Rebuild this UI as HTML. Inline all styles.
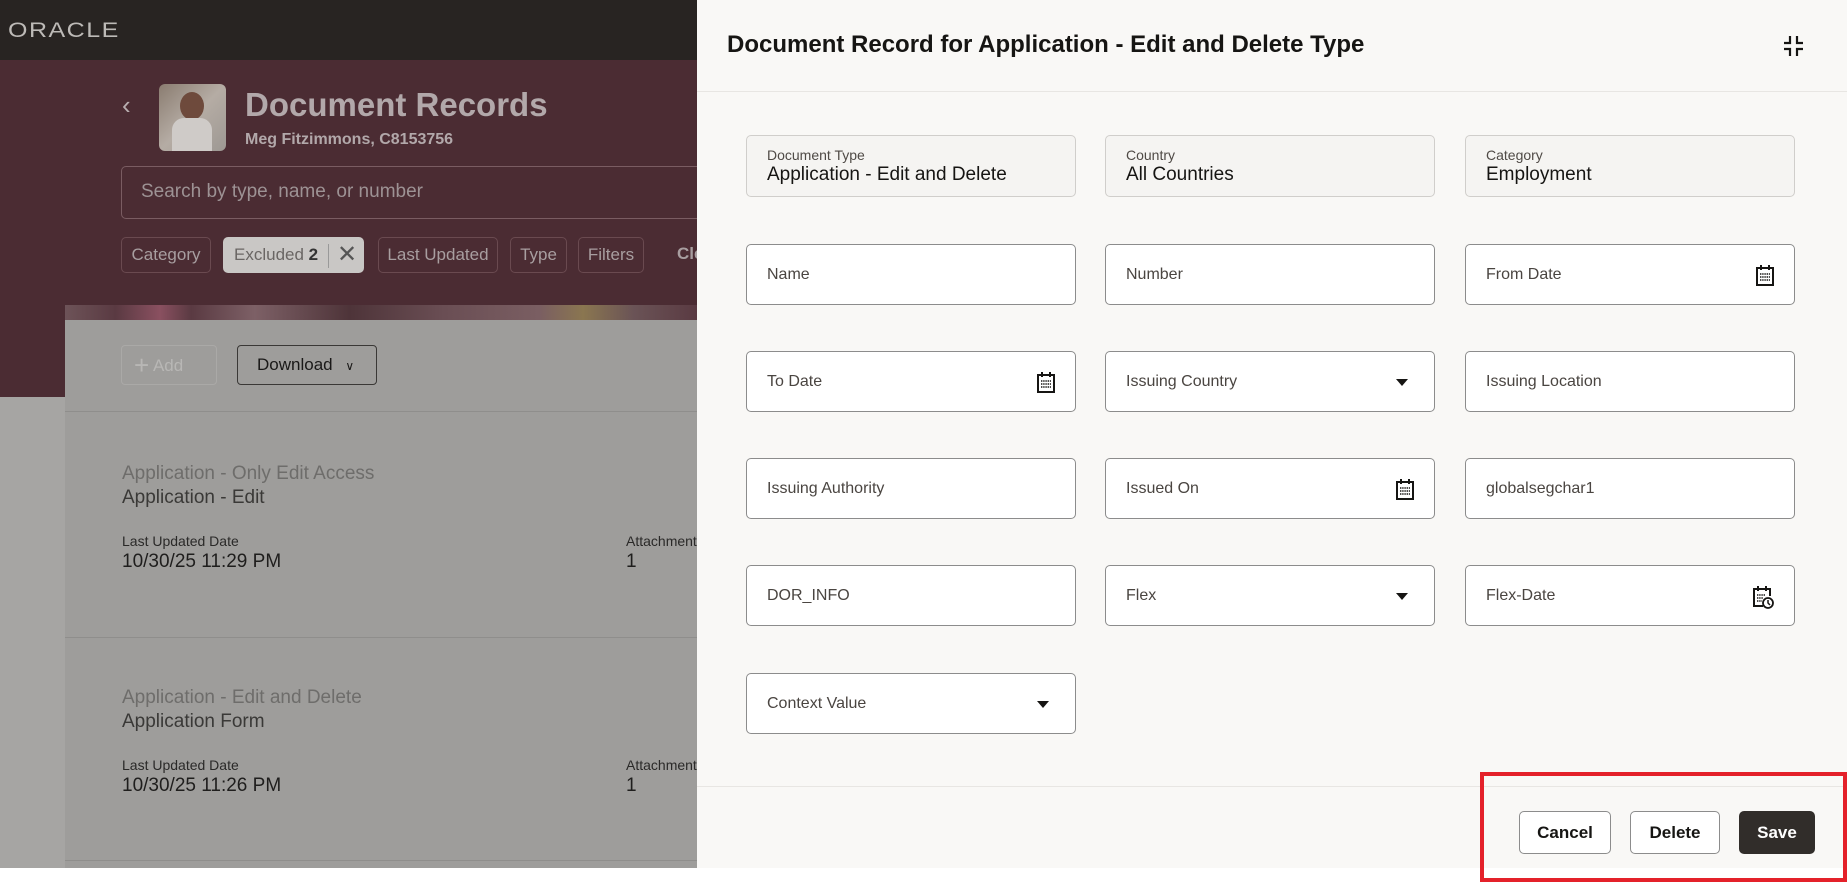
<!DOCTYPE html>
<html><head><meta charset="utf-8"><style>
*{box-sizing:border-box;margin:0;padding:0}
body{width:1847px;height:883px;position:relative;overflow:hidden;background:#fff;font-family:"Liberation Sans",sans-serif}
.a{position:absolute}
.t{position:absolute;white-space:nowrap}
.chip{position:absolute;top:237px;height:36px;border:1px solid #6a4a50;border-radius:5px;color:#a89ea0;font-size:17px;line-height:34px;text-align:center}
.f{position:absolute;width:330px;height:61px;border:1px solid #8c8c8c;border-radius:5px;background:#fff}
.f span{position:absolute;left:20px;top:0;line-height:59px;font-size:16px;color:#4a4541}
.ro{background:#f5f4f2;border-color:#d0cecb;height:62px}
.ro .l{position:absolute;left:20px;top:11px;font-size:14px;color:#4f4a46}
.ro .v{position:absolute;left:20px;top:28px;font-size:19px;color:#161513}
.ic{position:absolute;right:20px;top:20px}
.car{position:absolute;right:26px;top:27px;width:0;height:0;border-left:6px solid transparent;border-right:6px solid transparent;border-top:7px solid #161513}
.btn{position:absolute;top:811px;height:43px;border:1px solid #8c8c8c;border-radius:5px;background:#fff;font-size:17px;font-weight:bold;line-height:41px;text-align:center;color:#161513}
</style></head><body>
<div class="a" style="left:0;top:0;width:697px;height:60px;background:#282422"></div>
<div class="t" style="left:8px;top:16px;font-size:25px;color:#bdbab7;letter-spacing:1.5px;transform:scaleY(0.85)">ORACLE</div>
<div class="a" style="left:0;top:60px;width:697px;height:337px;background:#4b2c33"></div>
<div class="a" style="left:0;top:397px;width:697px;height:471px;background:#a6a5a3"></div>
<div class="t" style="left:122px;top:90px;font-size:26px;color:#b8aeb0">‹</div>
<div class="a" style="left:159px;top:84px;width:67px;height:67px;border-radius:6px;background:linear-gradient(135deg,#8a7c70,#b5aca4 50%,#9d9893)"></div>
<div class="a" style="left:180px;top:92px;width:24px;height:28px;border-radius:50%;background:#6e4a3c"></div>
<div class="a" style="left:172px;top:118px;width:40px;height:33px;border-radius:12px 12px 0 0;background:#cfcbc8"></div>
<div class="t" style="left:245px;top:86px;font-size:33px;font-weight:bold;color:#b2a8aa">Document Records</div>
<div class="t" style="left:245px;top:131px;font-size:16px;font-weight:bold;color:#b2a8aa">Meg Fitzimmons, C8153756</div>
<div class="a" style="left:121px;top:166px;width:620px;height:53px;border:1px solid #7a5c62;border-radius:5px"></div>
<div class="t" style="left:141px;top:181px;font-size:19px;color:#9d9294">Search by type, name, or number</div>
<div class="chip" style="left:121px;width:90px">Category</div>
<div class="chip" style="left:223px;width:141px;background:#c9c7c5;border-color:#c9c7c5;color:#6a6664;text-align:left;padding-left:10px">Excluded <b style="color:#333">2</b><span style="position:absolute;left:104px;top:6px;height:24px;border-left:1px solid #999"></span><span style="position:absolute;left:113px;top:0;font-size:24px;color:#555">✕</span></div>
<div class="chip" style="left:378px;width:120px">Last Updated</div>
<div class="chip" style="left:510px;width:57px">Type</div>
<div class="chip" style="left:578px;width:66px">Filters</div>
<div class="t" style="left:677px;top:244px;font-size:17px;font-weight:bold;color:#a89ea0">Cle</div>
<div class="a" style="left:65px;top:305px;width:632px;height:16px;background:linear-gradient(90deg,#6d5358 0,#5a3a42 8%,#8a5060 15%,#5a3a42 20%,#7d6066 30%,#4e3439 45%,#6a4e54 60%,#7a5e62 75%,#8a7650 82%,#6a5356 90%,#5a3a42 100%)"></div>
<div class="a" style="left:65px;top:320px;width:632px;height:548px;background:#9e9d9b"></div>
<div class="a" style="left:121px;top:345px;width:96px;height:40px;border:1px solid #aaa9a7;border-radius:4px;color:#b8b7b5;font-size:17px;line-height:38px;padding-left:12px"><span style="font-size:26px;vertical-align:-3px">+</span> Add</div>
<div class="a" style="left:237px;top:345px;width:140px;height:40px;border:1px solid #3a3836;border-radius:4px;color:#1a1918;font-size:17px;line-height:38px;padding-left:19px">Download <span style="font-size:12px;margin-left:8px">∨</span></div>
<div class="a" style="left:65px;top:411px;width:632px;height:1px;background:#8f8e8c"></div>
<div class="a" style="left:65px;top:637px;width:632px;height:1px;background:#8f8e8c"></div>
<div class="a" style="left:65px;top:860px;width:632px;height:1px;background:#8f8e8c"></div>
<div class="t" style="left:122px;top:463px;font-size:19px;color:#6e6d6b">Application - Only Edit Access</div>
<div class="t" style="left:122px;top:487px;font-size:19px;color:#3a3937">Application - Edit</div>
<div class="t" style="left:122px;top:533px;font-size:14px;color:#2a2928">Last Updated Date</div>
<div class="t" style="left:122px;top:551px;font-size:19px;color:#1f1e1d">10/30/25 11:29 PM</div>
<div class="t" style="left:626px;top:533px;font-size:14px;color:#2a2928">Attachments</div>
<div class="t" style="left:626px;top:551px;font-size:19px;color:#1f1e1d">1</div>
<div class="t" style="left:122px;top:687px;font-size:19px;color:#6e6d6b">Application - Edit and Delete</div>
<div class="t" style="left:122px;top:711px;font-size:19px;color:#3a3937">Application Form</div>
<div class="t" style="left:122px;top:757px;font-size:14px;color:#2a2928">Last Updated Date</div>
<div class="t" style="left:122px;top:775px;font-size:19px;color:#1f1e1d">10/30/25 11:26 PM</div>
<div class="t" style="left:626px;top:757px;font-size:14px;color:#2a2928">Attachments</div>
<div class="t" style="left:626px;top:775px;font-size:19px;color:#1f1e1d">1</div>

<div class="a" style="left:697px;top:0;width:1150px;height:868px;background:#f9f8f6"></div>
<div class="a" style="left:697px;top:91px;width:1150px;height:1px;background:#e8e6e3"></div>
<div class="a" style="left:697px;top:786px;width:1150px;height:1px;background:#e8e6e3"></div>
<div class="t" style="left:727px;top:31px;font-size:24px;font-weight:bold;color:#161513">Document Record for Application - Edit and Delete Type</div>
<svg class="a" style="left:1783px;top:36px" width="21" height="20" viewBox="0 0 21 20" fill="none" stroke="#161513" stroke-width="2.2"><path d="M7 0v7H1M14 0v7h6M7 20v-7H1M14 20v-7h6"/></svg>

<div class="f ro" style="left:746px;top:135px"><div class="l">Document Type</div><div class="v">Application - Edit and Delete</div></div>
<div class="f ro" style="left:1105px;top:135px"><div class="l">Country</div><div class="v">All Countries</div></div>
<div class="f ro" style="left:1465px;top:135px"><div class="l">Category</div><div class="v">Employment</div></div>

<div class="f" style="left:746px;top:244px"><span>Name</span></div>
<div class="f" style="left:1105px;top:244px"><span>Number</span></div>
<div class="f" style="left:1465px;top:244px"><span>From Date</span><svg class="ic" width="18" height="21" viewBox="0 0 18 21"><rect x="1" y="3" width="16" height="17" fill="none" stroke="#161513" stroke-width="2"/><path d="M5 0v5M13 0v5" stroke="#161513" stroke-width="2"/><path d="M4 9h10M4 12h10M4 15h10" stroke="#161513" stroke-width="1.6" stroke-dasharray="1.4 0.8"/></svg></div>

<div class="f" style="left:746px;top:351px"><span>To Date</span><svg class="ic" width="18" height="21" viewBox="0 0 18 21"><rect x="1" y="3" width="16" height="17" fill="none" stroke="#161513" stroke-width="2"/><path d="M5 0v5M13 0v5" stroke="#161513" stroke-width="2"/><path d="M4 9h10M4 12h10M4 15h10" stroke="#161513" stroke-width="1.6" stroke-dasharray="1.4 0.8"/></svg></div>
<div class="f" style="left:1105px;top:351px"><span>Issuing Country</span><div class="car"></div></div>
<div class="f" style="left:1465px;top:351px"><span>Issuing Location</span></div>

<div class="f" style="left:746px;top:458px"><span>Issuing Authority</span></div>
<div class="f" style="left:1105px;top:458px"><span>Issued On</span><svg class="ic" width="18" height="21" viewBox="0 0 18 21"><rect x="1" y="3" width="16" height="17" fill="none" stroke="#161513" stroke-width="2"/><path d="M5 0v5M13 0v5" stroke="#161513" stroke-width="2"/><path d="M4 9h10M4 12h10M4 15h10" stroke="#161513" stroke-width="1.6" stroke-dasharray="1.4 0.8"/></svg></div>
<div class="f" style="left:1465px;top:458px"><span>globalsegchar1</span></div>

<div class="f" style="left:746px;top:565px"><span>DOR_INFO</span></div>
<div class="f" style="left:1105px;top:565px"><span>Flex</span><div class="car"></div></div>
<div class="f" style="left:1465px;top:565px"><span>Flex-Date</span><svg class="ic" width="21" height="23" viewBox="0 0 21 23"><path d="M10 20H1V3h16v7" fill="none" stroke="#161513" stroke-width="2"/><path d="M5 0v5M13 0v5" stroke="#161513" stroke-width="2"/><path d="M4 9h8M4 12h6M4 15h5" stroke="#161513" stroke-width="1.6" stroke-dasharray="1.4 0.8"/><circle cx="15" cy="17" r="5" fill="#fff" stroke="#161513" stroke-width="1.8"/><path d="M15 14v3l2 2" fill="none" stroke="#161513" stroke-width="1.5"/></svg></div>

<div class="f" style="left:746px;top:673px"><span>Context Value</span><div class="car"></div></div>

<div class="btn" style="left:1519px;width:92px">Cancel</div>
<div class="btn" style="left:1630px;width:90px">Delete</div>
<div class="btn" style="left:1739px;width:76px;background:#312d2a;border-color:#312d2a;color:#fff">Save</div>
<div class="a" style="left:1480px;top:772px;width:367px;height:110px;border:4px solid #e4212a"></div>
</body></html>
